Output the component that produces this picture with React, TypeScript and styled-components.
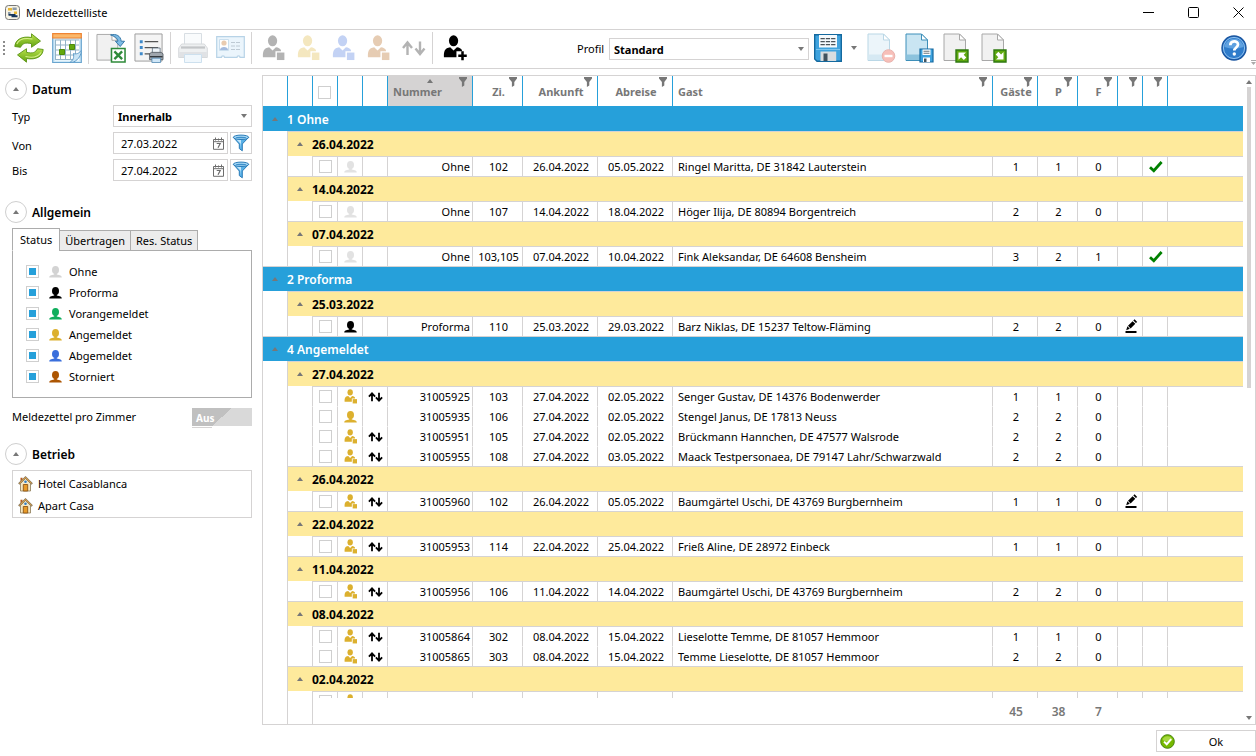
import React, { Fragment, useState } from "react";
import styled, { createGlobalStyle } from "styled-components";

const c = {
  blue: "#26a0da",
  yellow: "#feea9c",
  line: "#d5d3d3",
  grey: "#777777",
  gold: "#dcb02e",
};

const Global = createGlobalStyle`
  *, *::before, *::after { box-sizing: border-box; }
  body {
    margin: 0;
    background: #fff;
    color: #000;
    font: 11px/16px "Noto Sans", "Open Sans", sans-serif;
  }
  button, input, select { font: inherit; color: inherit; margin: 0; }
  svg { display: block; flex: none; }
`;

/* ---------- layout ---------- */
const Window = styled.div`
  display: flex;
  flex-direction: column;
  height: 100vh;
`;
const TitleBar = styled.header`
  display: flex;
  align-items: center;
  height: 29px;
  flex: none;
  padding: 0 0 4px 5px;
`;
const Title = styled.h1`
  margin: 0 0 0 6px;
  flex: 1;
  font-size: 11px;
  line-height: 16px;
  font-weight: 400;
`;
const WindowButton = styled.button`
  display: grid;
  place-items: center;
  width: 45px;
  height: 24px;
  padding: 0 0 0 9px;
  border: 0;
  background: none;
`;
const Toolbar = styled.div`
  display: flex;
  align-items: center;
  flex: none;
  height: 40px;
  border-top: 1px solid ${c.line};
  border-bottom: 1px solid ${c.line};
  padding: 0 9px 2px 3px;
  position: relative;
`;
const ToolGroup = styled.div<{ $gap?: number; $left?: number; $right?: number }>`
  display: flex;
  align-items: center;
  gap: ${(p) => p.$gap ?? 8}px;
  padding: 0 ${(p) => p.$right ?? 6}px 0 ${(p) => p.$left ?? 7}px;
`;
const ToolSeparator = styled.span`
  width: 1px;
  height: 32px;
  background: ${c.line};
`;
const IconButton = styled.button<{ $faded?: number }>`
  display: grid;
  place-items: center;
  padding: 0;
  border: 0;
  background: none;
  opacity: ${(p) => p.$faded ?? 1};
`;
const ProfileField = styled.div`
  display: flex;
  align-items: center;
  margin-left: 101px;
  padding-top: 2px;
`;
const ProfileLabel = styled.label`
  width: 32px;
`;
const Spacer = styled.span`
  flex: 1;
`;
const OverflowMark = styled.span`
  position: absolute;
  right: 0;
  bottom: 2px;
`;
const Content = styled.main`
  display: flex;
  flex: 1;
  min-height: 0;
  padding-top: 6px;
`;
const Sidebar = styled.aside`
  width: 262px;
  flex: none;
  padding: 3px 10px 0 5px;
`;
const Footer = styled.footer`
  display: flex;
  justify-content: flex-end;
  flex: none;
  padding: 5px 0 4px;
`;
const OkButton = styled.button`
  display: flex;
  align-items: center;
  width: 100px;
  height: 22px;
  padding: 0 0 0 3px;
  border: 1px solid ${c.line};
  background: #fff;
`;
const OkText = styled.span`
  flex: 1;
  padding: 2px 0 0 2px;
  text-align: center;
`;

/* ---------- form parts ---------- */
const SectionHead = styled.div`
  display: flex;
  align-items: center;
  gap: 5px;
  height: 22px;
`;
const SectionTitle = styled.h2`
  margin: 0;
  padding-top: 2px;
  font-size: 12px;
  line-height: 16px;
  font-weight: 600;
`;
const RoundButton = styled.button`
  display: grid;
  place-items: center;
  width: 22px;
  height: 22px;
  padding: 0;
  border: 1px solid #cfcfcf;
  border-radius: 50%;
  background: #fff;
`;
const SectionBody = styled.div<{ $top: number; $bottom: number }>`
  padding: ${(p) => p.$top}px 0 ${(p) => p.$bottom}px 7px;
`;
const FieldRow = styled.div`
  display: flex;
  align-items: center;
  height: 22px;
  & + & { margin-top: 5px; }
`;
const FieldLabel = styled.label<{ $low?: boolean }>`
  flex: 1;
  padding-top: 1px;
  align-self: ${(p) => (p.$low ? "flex-end" : "center")};
`;
const SelectBox = styled.div<{ $width: number }>`
  display: flex;
  align-items: center;
  width: ${(p) => p.$width}px;
  height: 22px;
  border: 1px solid ${c.line};
  position: relative;
`;
const Select = styled.select`
  appearance: none;
  width: 100%;
  height: 20px;
  padding: 1px 18px 0 4px;
  border: 0;
  background: none;
  font-weight: 700;
`;
const SelectArrow = styled.span`
  position: absolute;
  right: 4px;
  pointer-events: none;
`;
const DateBox = styled.div`
  display: flex;
  align-items: center;
  width: 115px;
  height: 22px;
  border: 1px solid ${c.line};
  padding: 0 3px 0 7px;
`;
const DateInput = styled.input`
  flex: 1;
  min-width: 0;
  height: 20px;
  padding: 0;
  border: 0;
  background: none;
`;
const FilterButton = styled.button`
  display: grid;
  place-items: center;
  width: 22px;
  height: 22px;
  margin-left: 2px;
  padding: 0;
  border: 1px solid ${c.line};
  background: #fff;
`;
const Tabs = styled.div`
  display: flex;
  align-items: flex-end;
  height: 23px;
`;
const Tab = styled.button<{ $active?: boolean }>`
  height: ${(p) => (p.$active ? 23 : 21)}px;
  padding: ${(p) => (p.$active ? "0 7px" : "0 5px")};
  border: 1px solid #acacac;
  border-bottom-color: ${(p) => (p.$active ? "#fff" : "#acacac")};
  background: ${(p) => (p.$active ? "#fff" : "#ececec")};
  white-space: nowrap;
  position: relative;
  & + & { margin-left: -1px; }
`;
const TabPanel = styled.div`
  display: flex;
  flex-direction: column;
  gap: 5px;
  margin-top: -1px;
  padding: 12px 13px 13px;
  border: 1px solid #acacac;
`;
const StatusOption = styled.label`
  display: grid;
  grid-template-columns: 23px 20px 1fr;
  align-items: center;
  height: 16px;
`;
const OptionText = styled.span`
  padding-top: 1px;
`;
const Check = styled.input.attrs({ type: "checkbox" })`
  appearance: none;
  display: block;
  width: 13px;
  height: 13px;
  border: 1px solid #cfcfcf;
  background: #fff;
  &:checked {
    background: ${c.blue};
    border-color: #cfcfcf;
    box-shadow: inset 0 0 0 2px #fff;
  }
`;
const SwitchRow = styled.div`
  display: flex;
  align-items: center;
  justify-content: space-between;
  height: 20px;
  margin-top: 9px;
`;
const Switch = styled.button`
  position: relative;
  width: 60px;
  height: 18px;
  padding: 1px 0 0 4px;
  border: 0;
  background: linear-gradient(138deg, #c0c0c0 50%, #d9d9d9 50%);
  color: #fff;
  font-size: 10px;
  line-height: 16px;
  font-weight: 700;
  text-align: left;
  &::after {
    content: "";
    position: absolute;
    left: 0;
    bottom: -2px;
    width: 20px;
    height: 1px;
    background: ${c.line};
  }
`;
const HotelList = styled.ul`
  display: flex;
  flex-direction: column;
  gap: 6px;
  margin: 0;
  padding: 5px 5px 3px;
  list-style: none;
  border: 1px solid ${c.line};
`;
const HotelItem = styled.li`
  display: flex;
  align-items: center;
  gap: 5px;
  height: 16px;
`;

/* ---------- grid ---------- */
const GridFrame = styled.section`
  display: flex;
  flex: 1;
  min-width: 0;
  border: 1px solid ${c.line};
`;
const GridScroller = styled.div`
  flex: 1;
  min-width: 0;
  overflow: auto;
  scrollbar-width: none;
`;
const ScrollTrack = styled.div`
  display: flex;
  flex-direction: column;
  align-items: center;
  width: 12px;
  padding: 4px 0;
`;
const ScrollThumb = styled.span`
  width: 4px;
  height: 47%;
  margin-top: 3px;
  background: ${c.line};
`;
const Table = styled.table`
  width: 100%;
  table-layout: fixed;
  border-collapse: separate;
  border-spacing: 0;
`;
const Head = styled.thead`
  position: sticky;
  top: 0;
  z-index: 1;
  background: #fff;
`;
const HeadCell = styled.th<{ $align?: string; $sorted?: boolean }>`
  position: relative;
  height: 30px;
  padding: ${(p) => (p.$align ? "2px 5px 0" : "2px 3px 0 5px")};
  border-left: 1px solid ${c.blue};
  background: ${(p) => (p.$sorted ? "#d5d3d3" : "#fff")};
  color: ${c.grey};
  font-weight: 700;
  text-align: ${(p) => p.$align ?? "center"};
  &:first-child { border-left: 0; }
`;
const HeadFilter = styled.span`
  position: absolute;
  top: 1px;
  right: 5px;
`;
const SortMark = styled.span`
  position: absolute;
  top: 3px;
  left: 39px;
`;
const GroupCell = styled.th`
  height: 25px;
  padding: 2px 0 0;
  background: ${c.blue};
  color: #fff;
  font-size: 12px;
  font-weight: 600;
  text-align: left;
  border-top: 1px solid ${c.line};
`;
const GroupRow = styled.tr`
  &:first-child ${GroupCell} { border-top-color: ${c.blue}; }
`;
const DateCell = styled.th<{ $edge?: boolean }>`
  height: 25px;
  padding: 2px 0 0;
  background: ${c.yellow};
  font-size: 12px;
  font-weight: 700;
  text-align: left;
  border-top: 1px solid ${c.line};
  border-left: ${(p) => (p.$edge ? `1px solid ${c.line}` : "0")};
`;
const Indent = styled.td<{ $lined?: boolean }>`
  padding: 0;
  border-left: ${(p) => (p.$lined ? `1px solid ${c.line}` : "0")};
`;
const sidePadding: Record<string, string> = {
  right: "0 2px 0 0",
  left: "0 0 0 5px",
  icon: "0 0 0 1px",
  center: "0 0 0 2px",
};
const Cell = styled.td<{ $align?: string; $first?: boolean }>`
  height: 20px;
  padding: ${(p) => sidePadding[p.$align ?? "center"]};
  border-left: 1px solid ${c.line};
  border-top: 1px solid ${(p) => (p.$first ? c.line : "#fff")};
  text-align: ${(p) => (p.$align === "icon" ? "center" : p.$align ?? "center")};
  white-space: nowrap;
  line-height: 18px;
`;
const Centered = styled.span`
  display: grid;
  place-items: center;
`;
const Toggle = styled.button`
  display: grid;
  place-items: center;
  width: 100%;
  height: 16px;
  padding: 0 0 2px;
  border: 0;
  background: none;
`;
const Foot = styled.tfoot`
  position: sticky;
  bottom: 0;
`;
const TotalCell = styled.td<{ $lined?: boolean }>`
  height: 26px;
  padding: 2px 0 0 2px;
  background: #fff;
  color: ${c.grey};
  font-size: 12px;
  font-weight: 600;
  text-align: center;
  border-left: 1px solid ${(p) => (p.$lined ? c.line : "#fff")};
  &:first-child { border-left: 0; }
`;

/* ---------- icons ---------- */
const Triangle = ({ down, color = c.grey }: { down?: boolean; color?: string }) => (
  <svg width="6" height="4" viewBox="0 0 6 4" fill={color}>
    <path d={down ? "M0 0h6L3 4z" : "M0 4h6L3 0z"} />
  </svg>
);

const Bust = ({ color }: { color: string }) => (
  <svg width="13" height="12" viewBox="0 0 13 12" fill={color}>
    <ellipse cx="6.500" cy="4" rx="3.500" ry="4" />
    <path d="M.2 11.500c0-2 1.800-2.500 5-3V6.500h2.600v2c3.200.5 5 1 5 3z" />
  </svg>
);

const PersonBox = ({ color, size = 14, plus }: { color: string; size?: number; plus?: boolean }) => (
  <svg width={size} height={Math.round(size * 1.1)} viewBox="0 0 24 27" fill={color}>
    <ellipse cx="10.500" cy="6" rx="4.800" ry="5.700" />
    <path d="M.5 23c-.3-6 .8-9.400 6.500-10.200l3.500 3.200 3.500-3.200c2.600.4 4.200 1.200 5.200 2.700V17H13.500v6z" />
    {plus ? (
      <path d="M18.500 17h2.600v3.300h3.100v2.600h-3.100v3.300h-2.600v-3.300h-3.100v-2.600h3.100z" />
    ) : (
      <path d="M15 18.200h7.800v7.800H15z" />
    )}
  </svg>
);

const UpDown = () => (
  <svg width="15" height="10" viewBox="0 0 15 10" fill="none" stroke="#000" strokeWidth="1.800">
    <path d="M4 9.300V1.600M.9 4.600L4 1.400l3.100 3.200M11 .7v7.700M7.900 5.400L11 8.600l3.100-3.200" />
  </svg>
);

const UpDownLarge = () => (
  <svg width="24" height="17" viewBox="0 0 24 17" fill="none" stroke="#b3b3b3" strokeWidth="2.400">
    <path d="M5.500 15V2.500M1 8l4.500-5.500L10 8M18 1.500V14M13.500 8.500L18 14l4.500-5.500" />
  </svg>
);

const Funnel = () => (
  <svg width="8" height="10" viewBox="0 0 8 10" fill={c.grey}>
    <path d="M0 0h8v1.500L5.300 5v3.400L2.900 10V5L0 1.500z" />
  </svg>
);

const BlueFunnel = () => (
  <svg width="18" height="18" viewBox="0 0 18 18">
    <path d="M1.500 3.500L7.300 10v4.600l3 2.200V10l6.200-6.500z" fill="#58b0e6" stroke="#2b7cb8" />
    <path d="M9 9V6L4 5l4.400 4.500v5z" fill="#c3e6fb" />
    <ellipse cx="9" cy="3.300" rx="7.700" ry="2.200" fill="#a6d8f6" stroke="#2b7cb8" />
    <ellipse cx="9" cy="3.500" rx="5.400" ry=".8" fill="#3c8fca" />
  </svg>
);

const CalendarSmall = () => (
  <svg width="11" height="13" viewBox="0 0 11 13" fill="none" stroke="#6d6d6d">
    <path d="M.5 2.500h10v9.800H.5zM.5 4.700h10M2.500.5v3M8.500.5v3M5.500 1.500v2" />
    <path d="M3.700 6.500h3.500L5 10.700" strokeWidth="1.200" />
  </svg>
);

const Tick = () => (
  <svg width="14" height="13" viewBox="0 0 14 13">
    <path d="M1 7.200l3.800 3.600L12.600 2" fill="none" stroke="#008000" strokeWidth="2.800" />
  </svg>
);

const Pen = () => (
  <svg width="14" height="15" viewBox="0 0 14 15">
    <path d="M1.500 13h11" stroke="#000" strokeWidth="2" />
    <path d="M2.200 11.200l1.200-4L5.800 9.700zM4 6.700l4.600-4.500 2.700 2.600-4.700 4.600zM9.300 1.500L10.600.300l2.600 2.600-1.300 1.200z" />
  </svg>
);

const House = () => (
  <svg width="15" height="16" viewBox="0 0 15 16">
    <path d="M2.500 7.500l5-5 5 5V15h-10z" fill="#f6e8c3" stroke="#8c7a55" strokeWidth=".8" />
    <path d="M2.500 1.800h2v3l-2 2z" fill="#b85a1c" />
    <path d="M.8 8L7.500 1.400 14.200 8" fill="none" stroke="#8a7b62" strokeWidth="2" />
    <path d="M1.500 7.300L7.500 1.500l6 5.800" fill="none" stroke="#e8a23b" strokeWidth="1" />
    <path d="M5.300 8.500h4.400V15H5.300z" fill="#e79a28" stroke="#8d5514" strokeWidth=".9" />
    <circle cx="7.500" cy="5.800" r="1.300" fill="#2f7ec8" />
  </svg>
);

const OkIcon = () => (
  <svg width="15" height="15" viewBox="0 0 15 15">
    <circle cx="7.500" cy="7.500" r="6.800" fill="#76b900" stroke="#47850c" />
    <path d="M2.500 6a5.200 5.200 0 0 1 10 0q-5 3-10 0z" fill="#a5d83f" />
    <path d="M4 7.600l2.700 2.600 4.500-5" fill="none" stroke="#fff" strokeWidth="2" />
  </svg>
);

const AppIcon = () => (
  <svg width="15" height="15" viewBox="0 0 15 15">
    <rect x=".5" y=".5" width="14" height="14" rx="3" fill="#f7f3e4" stroke="#777" />
    <path d="M3 3h4v2.500H3zM9 6.500h3V9H9z" fill="#e8b735" />
    <path d="M7.500 2.500h4.200V5H7.500zM3 7h2.500v2.500H3z" fill="#8b9aa8" />
    <path d="M5.500 9h5v1.200h2v2h-6v-1.500h-3V9z" fill="#17365c" />
  </svg>
);

const Refresh = () => (
  <svg width="30" height="30" viewBox="0 0 30 30">
    <defs>
      <linearGradient id="leaf" x1="0" y1="0" x2="0" y2="1">
        <stop offset="0" stopColor="#b9e04b" />
        <stop offset="1" stopColor="#62a511" />
      </linearGradient>
    </defs>
    <g fill="url(#leaf)" stroke="#5b9415" strokeWidth=".9" strokeLinejoin="round">
      <path d="M.8 13.500C1.300 6.500 8 2.800 17.500 4.500V.8l9 7.300-9 6.200v-3.600C11 9.200 8.500 10.500 6.500 14.300z" />
      <path d="M29.200 16.500c-.5 7-7.200 10.700-16.700 9v3.700l-9-7.300 9-6.200v3.600c6.500 1.500 9 .2 11-3.600z" />
    </g>
    <path d="M2.800 11C5 6 10 4.500 18.500 6M11.500 23.500c8 1.800 13 0 15.500-4" fill="none" stroke="#d9f08d" strokeWidth="1.100" />
  </svg>
);

const CalendarLarge = () => (
  <svg width="30" height="30" viewBox="0 0 30 30">
    <path d="M.7 4.500h28.600v25H.7z" fill="#cfe9f8" stroke="#6aa5cf" strokeWidth="1.200" />
    <path d="M.7.700h28.600v4.300H.7z" fill="#fbb86b" stroke="#ee8433" strokeWidth="1.200" />
    <path d="M3 6.500h24v21H3z" fill="#fff" />
    <path d="M3 7h24M3 12h24M3 17h24M3 22h24M3.500 7v20M8.500 7v20M13.500 7v20M18.500 7v20M23.500 7v20M3 26.500h20" stroke="#94b3c7" />
    <path d="M7.500 16.500h5v5h-5zM17.500 11.500h5v5h-5z" fill="#62a80f" stroke="#4c8a0b" />
    <path d="M17.500 29.500c4-2 4.500-5 4-9 2.500 1 5.500 0 7.800-3v1c-.5 5-4.500 10-9.500 11z" fill="#c8e4f5" stroke="#5f9cc9" />
  </svg>
);

const Sheet = ({ blue }: { blue?: boolean }) => (
  <g fill={blue ? "#c9e5f2" : "#f1f1f1"} stroke={blue ? "#3d8fb9" : "#a8a8a8"}>
    <path d="M1 1h15.500l6 6v20.500H1z" />
    <path d="M16.500 1v6h6z" fill="#fff" />
    {blue && <path d="M1.500 21.500h21v5.500h-21z" fill="#8cc3dd" stroke="none" />}
  </g>
);

const PrinterSmall = () => (
  <g>
    <path d="M4 0h8v6H4z" fill="#eef4f9" stroke="#5b6b7a" strokeWidth=".8" />
    <path d="M1 6l2-1.500h10L15 6v6H1z" fill="#9fa6ad" stroke="#4c535a" strokeWidth=".8" />
    <path d="M1.500 9h13" stroke="#30363c" strokeWidth="1.400" />
    <path d="M3.500 10.500h9V15h-9z" fill="#cfe6f7" stroke="#4a83ad" strokeWidth=".8" />
  </g>
);

const ExcelExport = () => (
  <svg width="30" height="30" viewBox="0 0 31 30">
    <Sheet />
    <path d="M15 1.500c6-1.500 10.500 1 11 6.500h3.500L25 13.500 20 8h2.700c-.5-3-3-5-7.700-6.500z" fill="#7dbbe4" stroke="#3577a8" />
    <path d="M16 15.500h14v14H16z" fill="#fff" stroke="#2f8a3a" strokeWidth="1.600" />
    <path d="M19 18.500l8 8M27 18.500l-8 8" stroke="#2f8a3a" strokeWidth="2.400" />
  </svg>
);

const ListPrint = () => (
  <svg width="30" height="30" viewBox="0 0 31 31">
    <path d="M1 1h28v28H1z" fill="#f4f4f4" stroke="#9b9b9b" />
    <path d="M6 7.500h3v3H6zM6 13.500h3v3H6zM6 20h3v3H6z" fill="#3e89c9" />
    <path d="M11 9h14M11 15h14M11 21.500h6" stroke="#555" strokeWidth="1.300" />
    <g transform="translate(15 15.500)"><PrinterSmall /></g>
  </svg>
);

const PrinterLarge = () => (
  <svg width="30" height="30" viewBox="0 0 30 30">
    <path d="M6.500.500h17V14h-17z" fill="#eef3f7" stroke="#8195a6" />
    <path d="M.7 15l3-4h22.600l3 4v9.500H.7z" fill="#c9ced3" stroke="#7d868e" />
    <path d="M3 14.500h24" stroke="#3d454c" strokeWidth="2.200" />
    <path d="M1.200 19h27.600v5H1.200z" fill="#9ba3ab" />
    <path d="M6.500 21.500h17v8h-17z" fill="#cfe6f7" stroke="#5d9bc8" />
  </svg>
);

const IdCard = () => (
  <svg width="29" height="24" viewBox="0 0 29 24">
    <path d="M.7.700h27.600v20.600H24c0-2-3-2-3 0H8.500c0-2-3-2-3 0H.7z" fill="#cfe7f8" stroke="#4e93c4" strokeWidth="1.200" />
    <path d="M3.500 3.500h9v11h-9z" fill="#fff" stroke="#7fb1d6" />
    <circle cx="8" cy="7" r="2.600" fill="#c9803d" />
    <path d="M4 14c0-4 8-4 8 0z" fill="#1f56b0" />
    <path d="M15 6.500h10M15 10h10M15 13.500h10" stroke="#5f7d95" strokeDasharray="4 1" />
  </svg>
);

const Disk = () => (
  <svg width="28" height="28" viewBox="0 0 28 28">
    <path d="M.7.700h26.600v26.600H3L.7 25z" fill="#3fa3de" stroke="#14699f" strokeWidth="1.400" />
    <path d="M5 1h18v12.500H5z" fill="#f5fafd" />
    <path d="M6.500 4.700h15M6.500 7.700h15M6.500 10.700h15" stroke="#4a5359" strokeWidth="1.200" strokeDasharray="4.300 1" />
    <path d="M6.500 17.500h15.700V27H6.500z" fill="#d8dde0" />
    <path d="M9.500 19.500h4V27h-4z" fill="#41535f" />
    <path d="M2 15.500h24" stroke="#7cc5ee" />
  </svg>
);

const PageDelete = () => (
  <svg width="29" height="30" viewBox="0 0 29 30">
    <Sheet blue />
    <circle cx="21.500" cy="23" r="6.300" fill="#ea4a38" stroke="#bf2a1b" />
    <path d="M17.500 23h8" stroke="#fff" strokeWidth="2.400" />
  </svg>
);

const PageSave = () => (
  <svg width="29" height="30" viewBox="0 0 29 30">
    <Sheet blue />
    <g transform="translate(14.500 15.500) scale(.5)">
      <path d="M1 1h26v26H1z" fill="#3fa3de" stroke="#14699f" strokeWidth="2.400" />
      <path d="M6 2h16v11H6zM7 18h14v9H7z" fill="#fff" />
      <path d="M8 5.500h12M8 9.500h12" stroke="#4a5359" strokeWidth="1.600" />
      <path d="M9 20h5v7H9z" fill="#41535f" />
    </g>
  </svg>
);

const PageArrow = ({ out }: { out?: boolean }) => (
  <svg width="29" height="30" viewBox="0 0 29 30">
    <Sheet />
    <path d="M13 17h12v12H13z" fill="#5fa80f" stroke="#2f7a12" strokeWidth="1.400" />
    <path
      d={out ? "M22.500 19v7.500H15l2.300-2.300-2.600-2.700 2.700-2.700 2.700 2.700z" : "M15.500 19.500H23l-2.300 2.300 2.600 2.700-2.500 2.500-2.700-2.700-2.600 2.500z"}
      fill="#fff"
    />
  </svg>
);

const Help = () => (
  <svg width="26" height="26" viewBox="0 0 26 26">
    <circle cx="13" cy="13" r="12" fill="#2f7ccb" stroke="#1a55a0" strokeWidth="1.400" />
    <circle cx="13" cy="13" r="10.600" fill="none" stroke="#8fc0ee" />
    <path d="M3.500 12a9.600 9.600 0 0 1 19 0q-9.500 3-19 0z" fill="#5fa1e0" />
    <path d="M9.300 10.200c0-5 7.700-5 7.700-.6 0 2.800-3.700 2.900-3.700 6" fill="none" stroke="#fff" strokeWidth="2.700" />
    <circle cx="13.300" cy="19" r="1.700" fill="#fff" />
  </svg>
);

const Grip = () => (
  <svg width="2" height="14" viewBox="0 0 2 14" fill="#8c8c8c">
    <path d="M0 0h2v2H0zM0 4h2v2H0zM0 8h2v2H0zM0 12h2v2H0z" />
  </svg>
);

/* ---------- data ---------- */
type Guest = {
  icon: "none" | "black" | "gold" | "goldBox";
  sync?: boolean;
  nr: string;
  room: string;
  from: string;
  to: string;
  name: string;
  n: [string, string, string];
  mark?: "tick" | "pen";
};
const g = (
  icon: Guest["icon"], nr: string, room: string, from: string, to: string, name: string,
  n: [string, string, string], mark?: Guest["mark"],
): Guest => ({ icon, sync: icon === "goldBox", nr, room, from, to, name, n, mark });

const groups: { title: string; days: { date: string; rows: Guest[] }[] }[] = [
  {
    title: "1 Ohne",
    days: [
      { date: "26.04.2022", rows: [g("none", "Ohne", "102", "26.04.2022", "05.05.2022", "Ringel Maritta, DE 31842 Lauterstein", ["1", "1", "0"], "tick")] },
      { date: "14.04.2022", rows: [g("none", "Ohne", "107", "14.04.2022", "18.04.2022", "Höger Ilija, DE 80894 Borgentreich", ["2", "2", "0"])] },
      { date: "07.04.2022", rows: [g("none", "Ohne", "103,105", "07.04.2022", "10.04.2022", "Fink Aleksandar, DE 64608 Bensheim", ["3", "2", "1"], "tick")] },
    ],
  },
  {
    title: "2 Proforma",
    days: [
      { date: "25.03.2022", rows: [g("black", "Proforma", "110", "25.03.2022", "29.03.2022", "Barz Niklas, DE 15237 Teltow-Fläming", ["2", "2", "0"], "pen")] },
    ],
  },
  {
    title: "4 Angemeldet",
    days: [
      {
        date: "27.04.2022",
        rows: [
          g("goldBox", "31005925", "103", "27.04.2022", "02.05.2022", "Senger Gustav, DE 14376 Bodenwerder", ["1", "1", "0"]),
          g("gold", "31005935", "106", "27.04.2022", "02.05.2022", "Stengel Janus, DE 17813 Neuss", ["2", "2", "0"]),
          g("goldBox", "31005951", "105", "27.04.2022", "02.05.2022", "Brückmann Hannchen, DE 47577 Walsrode", ["2", "2", "0"]),
          g("goldBox", "31005955", "108", "27.04.2022", "03.05.2022", "Maack Testpersonaea, DE 79147 Lahr/Schwarzwald", ["2", "2", "0"]),
        ],
      },
      { date: "26.04.2022", rows: [g("goldBox", "31005960", "102", "26.04.2022", "05.05.2022", "Baumgärtel Uschi, DE 43769 Burgbernheim", ["1", "1", "0"], "pen")] },
      { date: "22.04.2022", rows: [g("goldBox", "31005953", "114", "22.04.2022", "25.04.2022", "Frieß Aline, DE 28972 Einbeck", ["1", "1", "0"])] },
      { date: "11.04.2022", rows: [g("goldBox", "31005956", "106", "11.04.2022", "14.04.2022", "Baumgärtel Uschi, DE 43769 Burgbernheim", ["2", "2", "0"])] },
      {
        date: "08.04.2022",
        rows: [
          g("goldBox", "31005864", "302", "08.04.2022", "15.04.2022", "Lieselotte Temme, DE 81057 Hemmoor", ["1", "1", "0"]),
          g("goldBox", "31005865", "303", "08.04.2022", "15.04.2022", "Temme Lieselotte, DE 81057 Hemmoor", ["2", "2", "0"]),
        ],
      },
      { date: "02.04.2022", rows: [g("goldBox", "", "", "", "", "", ["", "", ""])] },
    ],
  },
];

const widths = [24, 25, 25, 25, 25, 85, 50, 75, 75, 320, 45, 40, 40, 25, 25];

const statuses: [string, string][] = [
  ["Ohne", "#d3d3d3"],
  ["Proforma", "#000000"],
  ["Vorangemeldet", "#0fae5c"],
  ["Angemeldet", c.gold],
  ["Abgemeldet", "#3a6fdc"],
  ["Storniert", "#ac5502"],
];

const RowIcon = ({ kind }: { kind: Guest["icon"] }) => {
  if (kind === "goldBox") return <PersonBox color={c.gold} />;
  return <Bust color={kind === "none" ? "#e2e2e2" : kind === "black" ? "#000" : c.gold} />;
};

const GuestRow = ({ row, first }: { row: Guest; first: boolean }) => (
  <tr>
    <Indent />
    <Indent $lined />
    <Cell $first={first} $align="icon"><Centered><Check aria-label={`${row.name} auswählen`} /></Centered></Cell>
    <Cell $first={first} $align="icon"><Centered><RowIcon kind={row.icon} /></Centered></Cell>
    <Cell $first={first} $align="icon"><Centered>{row.sync && row.nr && <UpDown />}</Centered></Cell>
    <Cell $first={first} $align="right">{row.nr}</Cell>
    <Cell $first={first}>{row.room}</Cell>
    <Cell $first={first}>{row.from}</Cell>
    <Cell $first={first}>{row.to}</Cell>
    <Cell $first={first} $align="left">{row.name}</Cell>
    {row.n.map((v, i) => <Cell key={i} $first={first}>{v}</Cell>)}
    <Cell $first={first} $align="icon"><Centered>{row.mark === "pen" && <Pen />}</Centered></Cell>
    <Cell $first={first} $align="icon"><Centered>{row.mark === "tick" && <Tick />}</Centered></Cell>
    <Cell $first={first} />
  </tr>
);

const GuestGrid = () => (
  <GridFrame>
    <GridScroller>
      <Table>
        <colgroup>
          {widths.map((w, i) => <col key={i} width={w} />)}
          <col />
        </colgroup>
        <Head>
          <tr>
            <HeadCell />
            <HeadCell />
            <HeadCell><Check aria-label="Alle auswählen" /></HeadCell>
            <HeadCell />
            <HeadCell />
            <HeadCell $align="left" $sorted>Nummer<SortMark><Triangle /></SortMark><HeadFilter><Funnel /></HeadFilter></HeadCell>
            {["Zi.", "Ankunft", "Abreise"].map((t) => (
              <HeadCell key={t}>{t}<HeadFilter><Funnel /></HeadFilter></HeadCell>
            ))}
            <HeadCell $align="left">Gast<HeadFilter><Funnel /></HeadFilter></HeadCell>
            {["Gäste", "P", "F", "", " "].map((t) => (
              <HeadCell key={t}>{t}<HeadFilter><Funnel /></HeadFilter></HeadCell>
            ))}
            <HeadCell />
          </tr>
        </Head>
        <tbody>
          {groups.map((group) => (
            <Fragment key={group.title}>
              <GroupRow>
                <GroupCell><Toggle aria-label="Gruppe zuklappen"><Triangle /></Toggle></GroupCell>
                <GroupCell colSpan={15}>{group.title}</GroupCell>
              </GroupRow>
              {group.days.map((day) => (
                <Fragment key={day.date}>
                  <tr>
                    <Indent />
                    <DateCell $edge><Toggle aria-label="Tag zuklappen"><Triangle /></Toggle></DateCell>
                    <DateCell colSpan={14}>{day.date}</DateCell>
                  </tr>
                  {day.rows.map((row, i) => <GuestRow key={i} row={row} first={i === 0} />)}
                </Fragment>
              ))}
            </Fragment>
          ))}
        </tbody>
        <Foot>
          <tr>
            <TotalCell />
            <TotalCell $lined />
            <TotalCell $lined />
            <TotalCell colSpan={7} />
            <TotalCell>45</TotalCell>
            <TotalCell>38</TotalCell>
            <TotalCell>7</TotalCell>
            <TotalCell colSpan={3} />
          </tr>
        </Foot>
      </Table>
    </GridScroller>
    <ScrollTrack>
      <Triangle />
      <ScrollThumb />
      <Spacer />
      <Triangle down />
    </ScrollTrack>
  </GridFrame>
);

const DateField = ({ id, label, value, low }: { id: string; label: string; value: string; low?: boolean }) => (
  <FieldRow>
    <FieldLabel htmlFor={id} $low={low}>{label}</FieldLabel>
    <DateBox>
      <DateInput id={id} defaultValue={value} />
      <CalendarSmall />
    </DateBox>
    <FilterButton aria-label={`${label} filtern`}><BlueFunnel /></FilterButton>
  </FieldRow>
);

const SectionHeader = ({ title }: { title: string }) => (
  <SectionHead>
    <RoundButton aria-label={`${title} zuklappen`}><Triangle /></RoundButton>
    <SectionTitle>{title}</SectionTitle>
  </SectionHead>
);

const FilterPanel = () => {
  const [tab, setTab] = useState("Status");
  return (
    <Sidebar>
      <SectionHeader title="Datum" />
      <SectionBody $top={5} $bottom={20}>
        <FieldRow>
          <FieldLabel htmlFor="typ">Typ</FieldLabel>
          <SelectBox $width={139}>
            <Select id="typ"><option>Innerhalb</option></Select>
            <SelectArrow><Triangle down /></SelectArrow>
          </SelectBox>
        </FieldRow>
        <DateField id="von" label="Von" value="27.03.2022" low />
        <DateField id="bis" label="Bis" value="27.04.2022" />
      </SectionBody>
      <SectionHeader title="Allgemein" />
      <SectionBody $top={5} $bottom={16}>
        <Tabs role="tablist">
          {["Status", "Übertragen", "Res. Status"].map((t) => (
            <Tab key={t} role="tab" $active={t === tab} onClick={() => setTab(t)}>{t}</Tab>
          ))}
        </Tabs>
        <TabPanel>
          {statuses.map(([name, color]) => (
            <StatusOption key={name}>
              <Check defaultChecked />
              <Bust color={color} />
              <OptionText>{name}</OptionText>
            </StatusOption>
          ))}
        </TabPanel>
        <SwitchRow>
          <span id="per-room">Meldezettel pro Zimmer</span>
          <Switch role="switch" aria-checked="false" aria-labelledby="per-room">Aus</Switch>
        </SwitchRow>
      </SectionBody>
      <SectionHeader title="Betrieb" />
      <SectionBody $top={5} $bottom={0}>
        <HotelList>
          <HotelItem><House />Hotel Casablanca</HotelItem>
          <HotelItem><House />Apart Casa</HotelItem>
        </HotelList>
      </SectionBody>
    </Sidebar>
  );
};

export default function App() {
  return (
    <>
      <Global />
      <Window>
        <TitleBar>
          <AppIcon />
          <Title>Meldezettelliste</Title>
          <WindowButton aria-label="Minimieren">
            <svg width="11" height="11" viewBox="0 0 11 11" stroke="#000"><path d="M0 5.500h11" /></svg>
          </WindowButton>
          <WindowButton aria-label="Maximieren">
            <svg width="11" height="11" viewBox="0 0 11 11" fill="none" stroke="#000"><rect x=".5" y=".5" width="10" height="10" rx="1" /></svg>
          </WindowButton>
          <WindowButton aria-label="Schließen">
            <svg width="11" height="11" viewBox="0 0 11 11" stroke="#000"><path d="M.5.500l10 10M10.500.500l-10 10" /></svg>
          </WindowButton>
        </TitleBar>
        <Toolbar>
          <Grip />
          <ToolGroup $left={9}>
            <IconButton aria-label="Aktualisieren"><Refresh /></IconButton>
            <IconButton aria-label="Kalender"><CalendarLarge /></IconButton>
          </ToolGroup>
          <ToolSeparator />
          <ToolGroup>
            <IconButton aria-label="Excel-Export"><ExcelExport /></IconButton>
            <IconButton aria-label="Liste drucken"><ListPrint /></IconButton>
          </ToolGroup>
          <ToolSeparator />
          <ToolGroup>
            <IconButton aria-label="Drucken" $faded={0.3}><PrinterLarge /></IconButton>
            <IconButton aria-label="Ausweis" $faded={0.4}><IdCard /></IconButton>
          </ToolGroup>
          <ToolSeparator />
          <ToolGroup $gap={11} $left={10}>
            <IconButton aria-label="Proforma"><PersonBox size={24} color="#b3b3b3" /></IconButton>
            <IconButton aria-label="Anmelden"><PersonBox size={24} color="#f4e7bf" /></IconButton>
            <IconButton aria-label="Abmelden"><PersonBox size={24} color="#c3d2f4" /></IconButton>
            <IconButton aria-label="Stornieren"><PersonBox size={24} color="#e6ccb3" /></IconButton>
            <IconButton aria-label="Übertragen"><UpDownLarge /></IconButton>
          </ToolGroup>
          <ToolSeparator />
          <ToolGroup $left={10} $right={9}>
            <IconButton aria-label="Neuer Gast"><PersonBox size={24} color="#000" plus /></IconButton>
          </ToolGroup>
          <ProfileField>
            <ProfileLabel htmlFor="profil">Profil</ProfileLabel>
            <SelectBox $width={200}>
              <Select id="profil"><option>Standard</option></Select>
              <SelectArrow><Triangle down /></SelectArrow>
            </SelectBox>
          </ProfileField>
          <ToolGroup $gap={9} $left={5} $right={5}>
            <IconButton aria-label="Profil speichern"><Disk /></IconButton>
            <IconButton aria-label="Weitere Optionen"><Triangle down /></IconButton>
          </ToolGroup>
          <ToolGroup $gap={9} $left={5}>
            <IconButton aria-label="Profil löschen" $faded={0.35}><PageDelete /></IconButton>
            <IconButton aria-label="Profil sichern"><PageSave /></IconButton>
            <IconButton aria-label="Profil importieren"><PageArrow /></IconButton>
            <IconButton aria-label="Profil exportieren"><PageArrow out /></IconButton>
          </ToolGroup>
          <Spacer />
          <IconButton aria-label="Hilfe"><Help /></IconButton>
          <OverflowMark>
            <svg width="5" height="6" viewBox="0 0 5 6" fill="#aaa"><path d="M0 0h5v1H0zM0 2h5L2.500 5z" /></svg>
          </OverflowMark>
        </Toolbar>
        <Content>
          <FilterPanel />
          <GuestGrid />
        </Content>
        <Footer>
          <OkButton><OkIcon /><OkText>Ok</OkText></OkButton>
        </Footer>
      </Window>
    </>
  );
}
